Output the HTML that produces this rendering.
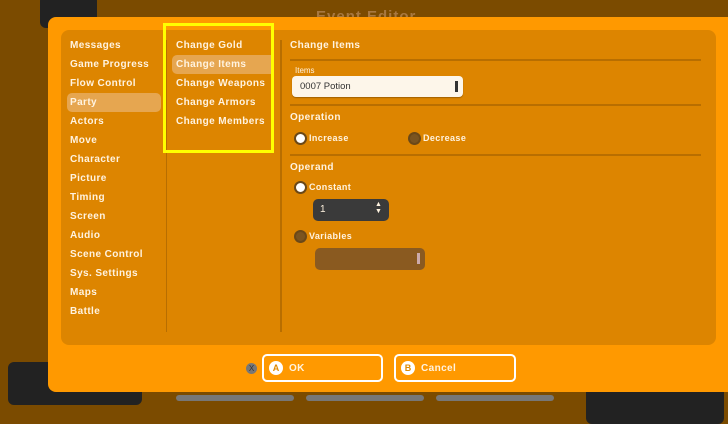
<html><head><style>
body{margin:0;width:728px;height:410px;background:#7b4b00;position:relative;overflow:hidden;font-family:"Liberation Sans",sans-serif;color:#fff3e0}
.a{position:absolute}
.t{position:absolute;font-size:10px;letter-spacing:.4px;font-weight:bold}
.hl{position:absolute;background:#e6a650;border-radius:5px}
.ln{position:absolute;height:2px;background:#b86e00;left:290px;width:411px}
.rad{position:absolute;width:9px;height:9px;border-radius:50%;border:2px solid #6a4818;background:#fff}
.rad.off{background:#7a5420}
.btn{position:absolute;height:24px;border:2px solid #fff;border-radius:5px;top:354px}
.ic{position:absolute;left:5px;top:5px;width:14px;height:14px;border-radius:50%;background:#fff;color:#e08a00;font-size:9px;font-weight:bold;text-align:center;line-height:14px}
</style></head><body>
<div class="a" style="left:40px;top:-5px;width:57px;height:33px;background:#222;border-radius:6px"></div>
<div class="a" style="left:8px;top:362px;width:134px;height:43px;background:#222;border-radius:6px"></div>
<div class="a" style="left:586px;top:384px;width:138px;height:40px;background:#222;border-radius:6px"></div>
<div class="a" style="left:176px;top:395px;width:118px;height:6px;background:#777;border-radius:3px"></div>
<div class="a" style="left:306px;top:395px;width:118px;height:6px;background:#777;border-radius:3px"></div>
<div class="a" style="left:436px;top:395px;width:118px;height:6px;background:#777;border-radius:3px"></div>
<div class="a" style="left:316px;top:8px;font-size:15px;font-weight:bold;color:#a87840;letter-spacing:1px">Event Editor</div>
<div class="a" style="left:48px;top:17px;width:690px;height:375px;background:#ff9900;border-radius:8px"></div>
<div class="a" style="left:61px;top:30px;width:655px;height:315px;background:#dd8500;border-radius:8px"></div>
<div class="a" style="left:166px;top:40px;width:1px;height:292px;background:#b86e00"></div>
<div class="a" style="left:280px;top:40px;width:2px;height:292px;background:#b86e00"></div>
<div class="hl" style="left:67px;top:93px;width:94px;height:19px"></div>
<div class="hl" style="left:172px;top:55px;width:100px;height:19px;border-radius:5px 0 0 5px"></div>
<div class="t" style="left:70px;top:40px">Messages</div>
<div class="t" style="left:70px;top:59px">Game Progress</div>
<div class="t" style="left:70px;top:78px">Flow Control</div>
<div class="t" style="left:70px;top:97px">Party</div>
<div class="t" style="left:70px;top:116px">Actors</div>
<div class="t" style="left:70px;top:135px">Move</div>
<div class="t" style="left:70px;top:154px">Character</div>
<div class="t" style="left:70px;top:173px">Picture</div>
<div class="t" style="left:70px;top:192px">Timing</div>
<div class="t" style="left:70px;top:211px">Screen</div>
<div class="t" style="left:70px;top:230px">Audio</div>
<div class="t" style="left:70px;top:249px">Scene Control</div>
<div class="t" style="left:70px;top:268px">Sys. Settings</div>
<div class="t" style="left:70px;top:287px">Maps</div>
<div class="t" style="left:70px;top:306px">Battle</div>
<div class="t" style="left:176px;top:40px">Change Gold</div>
<div class="t" style="left:176px;top:59px">Change Items</div>
<div class="t" style="left:176px;top:78px">Change Weapons</div>
<div class="t" style="left:176px;top:97px">Change Armors</div>
<div class="t" style="left:176px;top:116px">Change Members</div>
<div class="a" style="left:163px;top:23px;width:105px;height:124px;border:3px solid #ffff00"></div>
<div class="t" style="left:290px;top:40px">Change Items</div>
<div class="ln" style="top:59px"></div>
<div class="a" style="left:295px;top:66px;font-size:8px">Items</div>
<div class="a" style="left:292px;top:76px;width:171px;height:21px;background:#fdf6ea;border-radius:4px;box-shadow:0 1px 1px #a06000"></div>
<div class="a" style="left:300px;top:81px;font-size:9.5px;color:#333">0007 Potion</div>
<div class="a" style="left:455px;top:81px;width:3px;height:11px;background:#333"></div>
<div class="ln" style="top:104px"></div>
<div class="t" style="left:290px;top:112px">Operation</div>
<div class="rad" style="left:294px;top:132px"></div><div class="t" style="left:309px;top:133px;font-size:9px">Increase</div>
<div class="rad off" style="left:408px;top:132px"></div><div class="t" style="left:423px;top:133px;font-size:9px">Decrease</div>
<div class="ln" style="top:154px"></div>
<div class="t" style="left:290px;top:162px">Operand</div>
<div class="rad" style="left:294px;top:181px"></div><div class="t" style="left:309px;top:182px;font-size:9px">Constant</div>
<div class="a" style="left:313px;top:199px;width:76px;height:22px;background:#3a3a3a;border-radius:5px"></div>
<div class="a" style="left:320px;top:204px;font-size:10px">1</div>
<div class="a" style="left:375px;top:201px;font-size:7px;line-height:7px">▲<br>▼</div>
<div class="rad off" style="left:294px;top:230px"></div><div class="t" style="left:309px;top:231px;font-size:9px">Variables</div>
<div class="a" style="left:315px;top:248px;width:110px;height:22px;background:#8a5a20;border-radius:5px"></div>
<div class="a" style="left:417px;top:253px;width:3px;height:11px;background:#caa"></div>
<div class="a" style="left:246px;top:363px;width:11px;height:11px;border-radius:50%;background:#777;color:#333;font-size:8px;text-align:center;line-height:11px">X</div>
<div class="btn" style="left:262px;width:117px"><div class="ic">A</div><div class="t" style="left:25px;top:7px">OK</div></div>
<div class="btn" style="left:394px;width:118px"><div class="ic">B</div><div class="t" style="left:25px;top:7px">Cancel</div></div>
</body></html>
